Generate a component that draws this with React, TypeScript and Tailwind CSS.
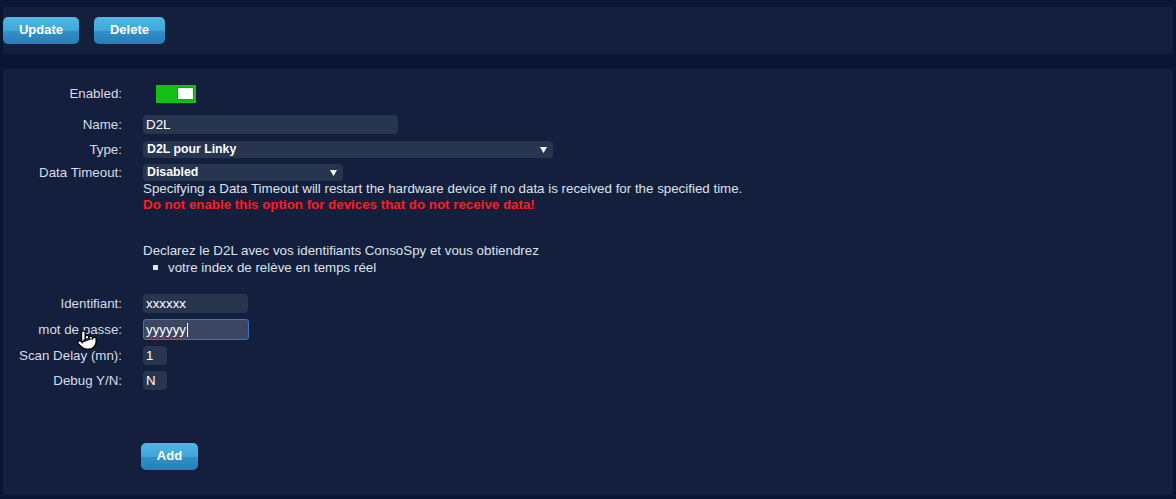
import React from "react";
import { Pointer } from "lucide-react";

const btn =
  "h-[27px] rounded-[5px] text-white font-bold text-[13px] bg-[linear-gradient(to_bottom,#4fb8e2_0%,#3ea7d8_50%,#3190c9_52%,#2a7db6_100%)] flex items-center justify-center pb-[1px]";

function Label({ children }: { children: React.ReactNode }) {
  return (
    <div className="w-[119px] shrink-0 text-right text-[13.33px] text-[#d9dee8] leading-none whitespace-nowrap">
      {children}
    </div>
  );
}

function Arrow() {
  return (
    <svg width="7" height="6" viewBox="0 0 7 6" className="shrink-0">
      <polygon points="0,0 7,0 3.5,6" fill="#ffffff" />
    </svg>
  );
}

export default function App() {
  return (
    <div
      className="w-[1176px] h-[499px] bg-[#0a1534] pt-[7px] pl-[3px] pr-[3px] overflow-hidden relative"
      style={{ fontFamily: '"Liberation Sans", Arial, sans-serif' }}
    >
      {/* Top toolbar */}
      <div className="h-[47px] bg-[#131f3d] flex items-start pt-[10px] gap-[15px]">
        <div className={btn + " w-[76px]"}>Update</div>
        <div className={btn + " w-[71px]"}>Delete</div>
      </div>

      {/* Form panel */}
      <div className="mt-[15px] h-[426px] bg-[#131f3d] pt-[16px] flex flex-col">
        {/* Enabled */}
        <div className="flex items-center h-[18px]">
          <Label>Enabled:</Label>
          <div className="ml-[34px] w-[40px] h-[18px] bg-[#13c014] relative">
            <div className="absolute left-[21px] top-[2px] w-[17px] h-[13px] bg-white border border-[#0ea80e]" />
          </div>
        </div>

        {/* Name */}
        <div className="flex items-center h-[19px] mt-[12px]">
          <Label>Name:</Label>
          <div className="ml-[21px] w-[255px] h-[19px] rounded-[4px] bg-[#28354f] flex items-center pl-[3px] text-[13.33px] text-white">
            D2L
          </div>
        </div>

        {/* Type */}
        <div className="flex items-center h-[17px] mt-[7px]">
          <Label>Type:</Label>
          <div className="ml-[21px] w-[410px] h-[17px] rounded-[4px] bg-[#28354f] flex items-center justify-between pl-[4px] pr-[6px] text-[12.3px] font-bold text-white">
            <span>D2L pour Linky</span>
            <Arrow />
          </div>
        </div>

        {/* Data Timeout */}
        <div className="flex items-start mt-[6px]">
          <div className="pt-[2px]">
            <Label>Data Timeout:</Label>
          </div>
          <div className="ml-[21px] flex flex-col">
            <div className="w-[200px] h-[17px] rounded-[4px] bg-[#28354f] flex items-center justify-between pl-[4px] pr-[6px] text-[12.3px] font-bold text-white">
              <span>Disabled</span>
              <Arrow />
            </div>
            <div className="text-[13.33px] leading-[16px] text-[#dfe3ea] whitespace-nowrap">
              Specifying a Data Timeout will restart the hardware device if no data is received for the specified time.
            </div>
            <div className="text-[13.33px] leading-[16px] font-bold text-[#ff1c1c] whitespace-nowrap">
              Do not enable this option for devices that do not receive data!
            </div>
          </div>
        </div>

        {/* Description */}
        <div className="ml-[140px] mt-[29px] text-[13.33px] leading-[17px] text-[#dfe3ea]">
          <div>Declarez le D2L avec vos identifiants ConsoSpy et vous obtiendrez</div>
          <div className="flex items-center">
            <span className="ml-[10px] w-[5px] h-[5px] bg-[#dfe3ea] inline-block" />
            <span className="ml-[10px]">votre index de relève en temps réel</span>
          </div>
        </div>

        {/* Identifiant */}
        <div className="flex items-center h-[19px] mt-[18px]">
          <Label>Identifiant:</Label>
          <div className="ml-[21px] w-[105px] h-[19px] rounded-[4px] bg-[#28354f] flex items-center pl-[3px] text-[13.33px] text-white">
            xxxxxx
          </div>
        </div>

        {/* mot de passe */}
        <div className="flex items-center h-[21px] mt-[6px]">
          <Label>mot de passe:</Label>
          <div className="ml-[21px] w-[106px] h-[21px] rounded-[3px] bg-[#3a4662] border border-[#3f72c2] flex items-center pl-[2px] text-[13.33px] text-white">
            <span className="underline decoration-wavy decoration-[#e02020] underline-offset-[2px]">yyyyyy</span>
            <span className="w-[1px] h-[14px] bg-white ml-[1px]" />
          </div>
        </div>

        {/* Scan Delay */}
        <div className="flex items-center h-[19px] mt-[6px]">
          <Label>Scan Delay (mn):</Label>
          <div className="ml-[21px] w-[24px] h-[19px] rounded-[4px] bg-[#28354f] flex items-center pl-[3px] text-[13.33px] text-white">
            1
          </div>
        </div>

        {/* Debug */}
        <div className="flex items-center h-[19px] mt-[6px]">
          <Label>Debug Y/N:</Label>
          <div className="ml-[21px] w-[24px] h-[19px] rounded-[4px] bg-[#28354f] flex items-center pl-[3px] text-[13.33px] text-white">
            N
          </div>
        </div>

        {/* Add */}
        <div className="mt-[53px] ml-[138px]">
          <div className={btn + " w-[57px]"}>Add</div>
        </div>
      </div>

      {/* mouse cursor */}
      <div className="absolute left-[76px] top-[329px]">
        <Pointer size={22} fill="#ffffff" stroke="#000000" strokeWidth={1.5} />
      </div>
    </div>
  );
}
